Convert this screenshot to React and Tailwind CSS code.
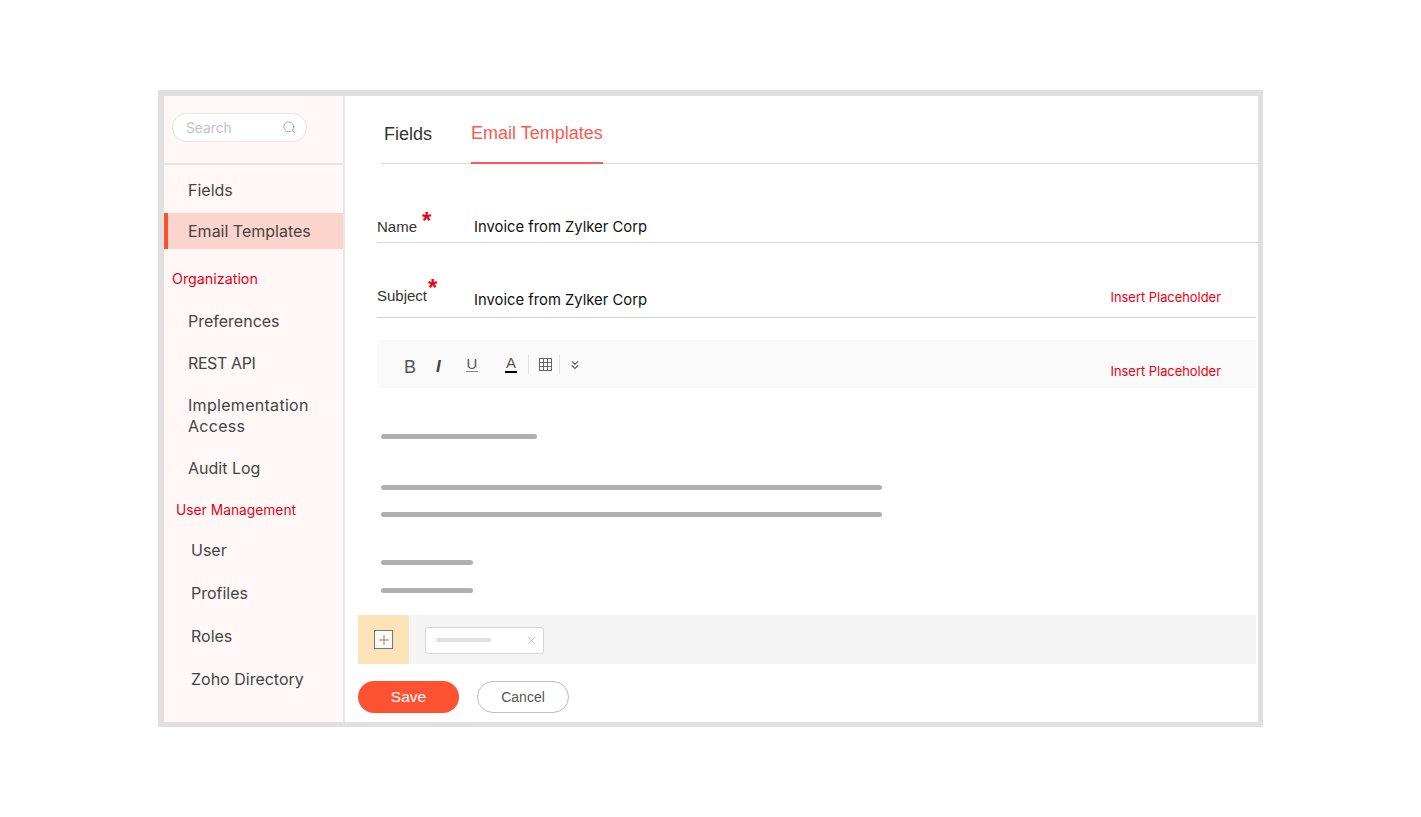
import { Search, X, Plus, ChevronsDown } from 'lucide-react';

const inter = 'font-["Inter",sans-serif]';
const arial = 'font-["Liberation_Sans",sans-serif]';

function NavItem({ children, className = '' }) {
  return <div className={`text-[16px] leading-[21px] text-[#444] ${className}`}>{children}</div>;
}

function GrayLine({ width, className = '' }) {
  return <div className={`h-[5px] rounded-full bg-[#b0b0b0] ${width} ${className}`} />;
}

function Sidebar() {
  return (
    <aside className={`w-[181px] shrink-0 border-r-2 border-[#e8e8e8] bg-[#fff8f7] ${inter}`}>
      <div className="h-[69px] border-b-2 border-[#e4e4e4] pl-2 pt-[17px]">
        <div className="flex h-[29px] w-[135px] items-center justify-between rounded-full border border-[#e4e4e4] bg-white pl-[13px] pr-[9px]">
          <span className="mt-[1px] text-[13.8px] text-[#c4c4c4]">Search</span>
          <Search className="h-[15px] w-[15px] text-[#888]" strokeWidth={1.1} />
        </div>
      </div>
      <NavItem className="mt-[15px] pl-6">Fields</NavItem>
      <div className="mt-[12px] flex h-[36px] items-center border-l-4 border-[#ff5233] bg-[#fbd4cb] pl-5 text-[16px] text-[#444]">
        Email Templates
      </div>
      <div className="mt-[21px] pl-2 text-[14.3px] leading-[18px] text-[#e60012]">Organization</div>
      <NavItem className="mt-[23px] pl-6">Preferences</NavItem>
      <NavItem className="mt-[21px] pl-6 tracking-[-0.4px]">REST API</NavItem>
      <NavItem className="mt-[21px] pl-6 tracking-[0.3px]">Implementation<br />Access</NavItem>
      <NavItem className="mt-[21px] pl-6">Audit Log</NavItem>
      <div className="mt-[22px] pl-3 text-[13.8px] leading-[18px] text-[#e60012]">User Management</div>
      <NavItem className="mt-[21px] pl-[27px]">User</NavItem>
      <NavItem className="mt-[22px] pl-[27px]">Profiles</NavItem>
      <NavItem className="mt-[22px] pl-[27px]">Roles</NavItem>
      <NavItem className="mt-[22px] pl-[27px]">Zoho Directory</NavItem>
    </aside>
  );
}

function Toolbar() {
  return (
    <div className={`ml-[32px] mr-[2px] mt-[22px] flex h-[48px] items-center justify-between bg-[#fafafa] ${arial}`}>
      <div className="flex items-center text-[#555]">
        <span className="ml-[27px] mt-[6px] w-[12px] text-[18px] leading-[20px]">B</span>
        <span className="ml-[20px] mt-[6px] w-[9px] text-[17px] font-bold italic leading-[20px] text-[#444]">I</span>
        <span className="ml-[21px] w-[12px] border-b border-[#888] text-center text-[15px] leading-[15px]">U</span>
        <span className="ml-[27px] w-[12px] border-b-2 border-black text-center text-[15px] leading-[16px]">A</span>
        <span className="ml-[11px] h-[19px] w-px bg-[#e2e2e2]" />
        <svg className="ml-[10px] h-[13px] w-[13px]" viewBox="0 0 13 13" fill="none" stroke="#666" strokeWidth="1">
          <rect x="0.5" y="0.5" width="12" height="12" />
          <path d="M4.5 0.5v12M8.5 0.5v12M0.5 4.5h12M0.5 8.5h12" />
        </svg>
        <span className="ml-[7px] h-[19px] w-px bg-[#e2e2e2]" />
        <ChevronsDown className="ml-[8px] mt-[1px] h-[14px] w-[14px] text-[#444]" strokeWidth={1.8} />
      </div>
      <span className={`mr-[35px] mt-[15px] text-[12.9px] text-[#f00011] ${inter}`}>Insert Placeholder</span>
    </div>
  );
}

function Main() {
  return (
    <main className="min-w-0 flex-1">
      <div className={`-mr-[4px] ml-[36px] flex h-[68px] items-stretch border-b border-[#dcdcdc] ${arial}`}>
        <div className="ml-[3px] pt-[27px] text-[18px] leading-[22px] text-[#333]">Fields</div>
        <div className="ml-[39px] -mb-px border-b-2 border-[#fc5a50] pt-[26px] text-[18px] leading-[22px] text-[#fc5a50]">
          Email Templates
        </div>
      </div>

      <div className={`-mr-[4px] ml-[32px] mt-[44px] flex h-[35px] items-end border-b border-[#d8d8d8] pb-[6px] ${inter}`}>
        <span className={`relative w-[97px] text-[15px] leading-[18px] text-[#333] ${arial}`}>
          Name
          <span className="absolute left-[45px] -top-[9px] text-[24px] font-bold leading-[24px] text-[#f00011]">*</span>
        </span>
        <span className="text-[14.8px] leading-[18px] text-[#111]">Invoice from Zylker Corp</span>
      </div>

      <div className={`ml-[32px] mr-[2px] mt-[39px] flex h-[36px] items-end border-b border-[#d0d0d0] pb-[8px] ${inter}`}>
        <span className={`relative mb-[4px] w-[97px] text-[15px] leading-[18px] text-[#333] ${arial}`}>
          Subject
          <span className="absolute left-[51px] -top-[11px] text-[24px] font-bold leading-[24px] text-[#f00011]">*</span>
        </span>
        <span className="text-[14.8px] leading-[18px] text-[#111]">Invoice from Zylker Corp</span>
        <span className="ml-auto mb-[3px] mr-[35px] text-[12.9px] leading-[16px] text-[#f00011]">Insert Placeholder</span>
      </div>

      <Toolbar />

      <div className="ml-[36px] pt-[46px]">
        <GrayLine width="w-[156px]" />
        <GrayLine width="w-[501px]" className="mt-[46px]" />
        <GrayLine width="w-[501px]" className="mt-[22px]" />
        <GrayLine width="w-[92px]" className="mt-[43px]" />
        <GrayLine width="w-[92px]" className="mt-[23px]" />
      </div>

      <div className="ml-[13px] mr-[2px] mt-[22px] flex h-[49px] items-center bg-[#f4f4f4]">
        <div className="flex h-full w-[51px] items-center justify-center bg-[#fde3b8]">
          <div className="flex h-[19px] w-[19px] items-center justify-center border-[1.5px] border-[#777] bg-[#fffaf2]">
            <Plus className="h-[16px] w-[16px] text-[#666]" strokeWidth={1.1} />
          </div>
        </div>
        <div className="ml-[16px] mt-[1px] flex h-[27px] w-[119px] items-center justify-between rounded-[3px] border-[1.5px] border-[#d6d6d6] bg-white pl-[10px] pr-[5px]">
          <div className="h-[4px] w-[55px] rounded-full bg-[#dedede]" />
          <X className="h-[13px] w-[13px] text-[#aaa]" strokeWidth={1.2} />
        </div>
      </div>

      <div className={`ml-[13px] mt-[17px] flex gap-[18px] ${arial}`}>
        <button className="h-[32px] w-[101px] rounded-full bg-[#ff5233] text-[15.5px] text-white">Save</button>
        <button className="h-[32px] w-[92px] rounded-full border border-[#bdbdbd] bg-white text-[14px] text-[#555]">Cancel</button>
      </div>
    </main>
  );
}

export default function App() {
  return (
    <div className="h-[817px] w-full overflow-hidden bg-white pl-[158px] pt-[90px]">
      <div className="flex h-[637px] w-[1105px] border-[6px] border-b-[5px] border-r-[5px] border-[#e0e0e0] bg-white">
        <Sidebar />
        <Main />
      </div>
    </div>
  );
}
